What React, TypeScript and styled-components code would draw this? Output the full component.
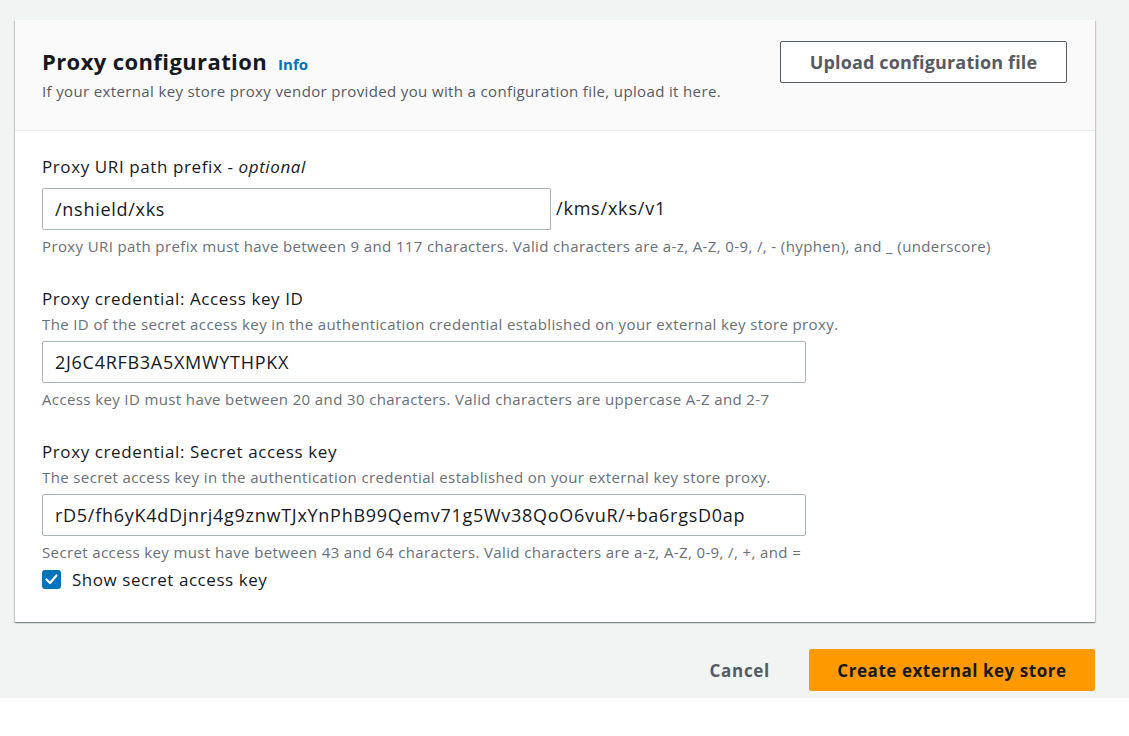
import React from "react";
import styled, { createGlobalStyle } from "styled-components";

const Global = createGlobalStyle`
  html, body { margin: 0; padding: 0; background: #ffffff; }
  body { font-family: "Open Sans", "Noto Sans", Arial, sans-serif; color: #16191f; }
  * { box-sizing: border-box; }
`;

const Page = styled.div`
  background: #f2f3f3;
  height: 698px;
  padding: 20px 34px 0 15px;
  display: flex;
  flex-direction: column;
`;

const Card = styled.section`
  width: 1080px;
  background: #ffffff;
  box-shadow: 0 1px 1px 0 rgba(0, 28, 36, 0.3), 1px 1px 1px 0 rgba(0, 28, 36, 0.15),
    -1px 1px 1px 0 rgba(0, 28, 36, 0.15);
`;

const CardHeader = styled.header`
  background: #fafafa;
  border-bottom: 1px solid #eaeded;
  height: 111px;
  padding: 21px 28px 0 27px;
  display: flex;
  justify-content: space-between;
  align-items: flex-start;
`;

const HeaderText = styled.div`
  display: flex;
  flex-direction: column;
`;

const TitleRow = styled.div`
  display: flex;
  align-items: baseline;
  gap: 11px;
  margin-top: 4px;
`;

const Title = styled.h2`
  margin: 0;
  font-size: 22px;
  line-height: 32px;
  font-weight: 700;
  letter-spacing: 0.4px;
  color: #16191f;
`;

const InfoLink = styled.a`
  font-size: 15px;
  font-weight: 700;
  color: #0073bb;
  text-decoration: none;
`;

const Subtitle = styled.p`
  margin: 3px 0 0;
  font-size: 15px;
  line-height: 22px;
  letter-spacing: 0.36px;
  color: #545b64;
`;

const OutlineButton = styled.button`
  height: 42px;
  width: 287px;
  border: 1px solid #545b64;
  border-radius: 2px;
  background: #ffffff;
  color: #545b64;
  font-family: inherit;
  font-size: 18px;
  font-weight: 700;
  letter-spacing: 0.15px;
`;

const CardBody = styled.div`
  padding: 24px 27px 31px 27px;
  display: flex;
  flex-direction: column;
  gap: 30px;
`;

const Field = styled.div`
  display: flex;
  flex-direction: column;
`;

const Label = styled.label`
  font-size: 17px;
  line-height: 24px;
  letter-spacing: 0.6px;
  color: #16191f;
  em { font-style: italic; }
  & + input, & + div:not([data-desc]) { margin-top: 9px; }
`;

const Description = styled.div`
  font-size: 15px;
  line-height: 22px;
  letter-spacing: 0.38px;
  color: #687078;
  margin-top: 2px;
  margin-bottom: 6px;
`;

const Constraint = styled.div`
  font-size: 15px;
  line-height: 22px;
  letter-spacing: 0.38px;
  color: #687078;
  margin-top: 5px;
`;

const InputRow = styled.div`
  display: flex;
  align-items: center;
  gap: 5px;
`;

const TextInput = styled.input<{ $w: number }>`
  width: ${(p) => p.$w}px;
  height: 42px;
  border: 1px solid #aab7b8;
  border-radius: 2px;
  padding: 0 12px;
  font-family: inherit;
  font-size: 18px;
  letter-spacing: 0.72px;
  color: #16191f;
  background: #ffffff;
  outline: none;
`;

const Suffix = styled.span`
  font-size: 18px;
  letter-spacing: 0.8px;
  color: #16191f;
  margin-bottom: 2px;
`;

const CheckRow = styled.label`
  display: flex;
  align-items: center;
  gap: 11px;
  margin-top: 4px;
  height: 24px;
  font-size: 17px;
  letter-spacing: 0.55px;
  color: #16191f;
`;

const CheckBox = styled.span`
  width: 19px;
  height: 19px;
  border-radius: 3px;
  background: #0073bb;
  display: inline-flex;
  align-items: center;
  justify-content: center;
`;

const Footer = styled.div`
  width: 1080px;
  display: flex;
  justify-content: flex-end;
  align-items: center;
  gap: 39px;
  margin-top: 27px;
`;

const LinkButton = styled.button`
  border: none;
  background: transparent;
  color: #545b64;
  font-family: inherit;
  font-size: 17px;
  font-weight: 700;
  letter-spacing: 0.7px;
  padding: 0;
`;

const PrimaryButton = styled.button`
  height: 42px;
  width: 286px;
  border: none;
  border-radius: 2px;
  background: #ff9900;
  color: #16191f;
  font-family: inherit;
  font-size: 17px;
  font-weight: 700;
  letter-spacing: 0.55px;
`;

export default function App() {
  return (
    <>
      <Global />
      <Page>
        <Card>
          <CardHeader>
            <HeaderText>
              <TitleRow>
                <Title>Proxy configuration</Title>
                <InfoLink href="#">Info</InfoLink>
              </TitleRow>
              <Subtitle>
                If your external key store proxy vendor provided you with a configuration file, upload it here.
              </Subtitle>
            </HeaderText>
            <OutlineButton>Upload configuration file</OutlineButton>
          </CardHeader>
          <CardBody>
            <Field>
              <Label>
                Proxy URI path prefix - <em>optional</em>
              </Label>
              <InputRow>
                <TextInput $w={509} defaultValue="/nshield/xks" />
                <Suffix>/kms/xks/v1</Suffix>
              </InputRow>
              <Constraint>
                Proxy URI path prefix must have between 9 and 117 characters. Valid characters are a-z, A-Z, 0-9, /, - (hyphen), and _ (underscore)
              </Constraint>
            </Field>
            <Field>
              <Label>Proxy credential: Access key ID</Label>
              <Description data-desc>
                The ID of the secret access key in the authentication credential established on your external key store proxy.
              </Description>
              <TextInput $w={764} defaultValue="2J6C4RFB3A5XMWYTHPKX" />
              <Constraint>
                Access key ID must have between 20 and 30 characters. Valid characters are uppercase A-Z and 2-7
              </Constraint>
            </Field>
            <Field>
              <Label>Proxy credential: Secret access key</Label>
              <Description data-desc>
                The secret access key in the authentication credential established on your external key store proxy.
              </Description>
              <TextInput $w={764} defaultValue="rD5/fh6yK4dDjnrj4g9znwTJxYnPhB99Qemv71g5Wv38QoO6vuR/+ba6rgsD0ap" />
              <Constraint>
                Secret access key must have between 43 and 64 characters. Valid characters are a-z, A-Z, 0-9, /, +, and =
              </Constraint>
              <CheckRow>
                <CheckBox>
                  <svg width="13" height="11" viewBox="0 0 13 11" fill="none">
                    <path d="M1.5 5.5 L5 9 L11.5 1.5" stroke="#ffffff" strokeWidth="2.2" strokeLinecap="round" strokeLinejoin="round" />
                  </svg>
                </CheckBox>
                Show secret access key
              </CheckRow>
            </Field>
          </CardBody>
        </Card>
        <Footer>
          <LinkButton>Cancel</LinkButton>
          <PrimaryButton>Create external key store</PrimaryButton>
        </Footer>
      </Page>
    </>
  );
}
